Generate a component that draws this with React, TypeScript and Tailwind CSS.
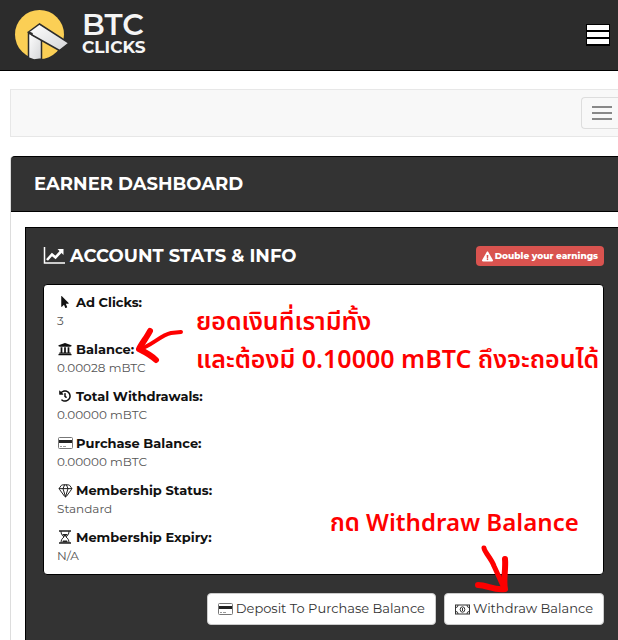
import type { ReactNode } from "react";
import { Gem } from "lucide-react";
import { FaExclamationTriangle, FaHistory, FaMousePointer, FaUniversity } from "react-icons/fa";

type Stat = {
  label: string;
  value: string;
  icon: ReactNode;
};

const stats: Stat[] = [
  { label: "Ad Clicks:", value: "3", icon: <FaMousePointer className="size-3" /> },
  { label: "Balance:", value: "0.00028 mBTC", icon: <FaUniversity className="size-3.5" /> },
  { label: "Total Withdrawals:", value: "0.00000 mBTC", icon: <FaHistory className="size-3" /> },
  { label: "Purchase Balance:", value: "0.00000 mBTC", icon: <CardIcon /> },
  { label: "Membership Status:", value: "Standard", icon: <Gem className="size-[15px]" strokeWidth={1.5} /> },
  { label: "Membership Expiry:", value: "N/A", icon: <HourglassIcon /> },
];

export default function App() {
  return (
    <div className="min-h-screen overflow-hidden bg-white font-[Montserrat,Inter,sans-serif] text-[#333]">
      <SiteHeader />
      <main className="pl-2.5">
        <nav aria-label="Account" className="mt-[18px] flex h-12 items-center justify-end border border-r-0 border-[#e7e7e7] bg-[#f8f8f8]">
          <button type="button" aria-label="Toggle navigation" className="flex h-8 w-[37px] flex-col items-start justify-center gap-1 rounded-l border border-r-0 border-[#ddd] pl-2.5">
            <span className="h-0.5 w-5 bg-[#888]" />
            <span className="h-0.5 w-5 bg-[#888]" />
            <span className="h-0.5 w-5 bg-[#888]" />
          </button>
        </nav>

        <section className="mt-[19px] rounded-tl border-l border-[#ddd]">
          <h1 className="rounded-tl border-y border-black bg-[#333] py-[15px] pl-[23px] text-lg leading-6 font-bold text-white">EARNER DASHBOARD</h1>
          <div className="pt-[15px] pl-3.5">
            <AccountStats />
          </div>
        </section>
      </main>
    </div>
  );
}

function SiteHeader() {
  return (
    <header className="flex h-[71px] items-center justify-between border-b border-black bg-[#2c2c2c] pr-2 pl-3.5">
      <a href="#" className="flex items-center gap-3 text-[#f5f5f5]">
        <LogoMark />
        <span className="flex flex-col pb-1">
          <span className="text-3xl leading-7 font-semibold">BTC</span>
          <span className="text-[17px] leading-4 font-bold">CLICKS</span>
        </span>
      </a>
      <button type="button" aria-label="Open menu" className="text-white">
        <svg viewBox="0 0 24 22" className="h-[22px] w-6">
          <path d="M0 0h24v22H0z" fill="#000" />
          <path d="M1 1h22v5H1zM1 8h22v5H1zM1 15h22v5H1z" fill="currentColor" />
        </svg>
      </button>
    </header>
  );
}

function AccountStats() {
  return (
    <section className="border-t border-l border-black bg-[#333] pt-4 pr-3.5 pb-4 pl-[17px]">
      <div className="flex items-center justify-between">
        <h2 className="flex items-center gap-1 text-lg leading-6 font-bold text-white">
          <ChartIcon />
          ACCOUNT STATS &amp; INFO
        </h2>
        <a href="#" className="flex items-center gap-0.5 rounded-sm bg-[#d9534f] px-1.5 text-[9px] leading-5 font-extrabold text-white">
          <FaExclamationTriangle className="size-[11px]" />
          Double your earnings
        </a>
      </div>

      <div className="relative mt-4 rounded-sm border border-black bg-white px-[13px] pt-[7px] pb-[9px]">
        <dl className="flex flex-col gap-[9px]">
          {stats.map((stat) => (
            <div key={stat.label}>
              <dt className="flex items-center gap-[3px] text-[13px] leading-5 font-bold text-[#111]">
                <span className="flex w-4 justify-center">{stat.icon}</span>
                {stat.label}
              </dt>
              <dd className="text-xs leading-[18px] text-[#555]">{stat.value}</dd>
            </div>
          ))}
        </dl>
        <Notes />
      </div>

      <div className="mt-[18px] flex justify-end gap-2">
        <ActionButton icon={<CardIcon />} label="Deposit To Purchase Balance" />
        <ActionButton icon={<MoneyIcon />} label="Withdraw Balance" />
      </div>
    </section>
  );
}

function ActionButton({ icon, label }: { icon: ReactNode; label: string }) {
  return (
    <button type="button" className="flex h-8 items-center gap-[3px] rounded border border-[#ccc] bg-white px-2.5 text-[13px] whitespace-nowrap text-[#333]">
      {icon}
      {label}
    </button>
  );
}

// Handwritten style notes laid over the stats card
function Notes() {
  return (
    <div className="pointer-events-none absolute inset-0 font-['Noto_Sans_Thai','Open_Sans',sans-serif] whitespace-nowrap text-[#fe0000]">
      <p className="absolute top-[18px] left-[152px] text-[25px] leading-[38px] font-semibold">
        ยอดเงินที่เรามีทั้ง
        <br />
        และต้องมี 0.10000 mBTC ถึงจะถอนได้
      </p>
      <p className="absolute top-[220px] left-[286px] text-2xl leading-[38px] font-semibold">กด Withdraw Balance</p>
      <svg viewBox="0 0 48 38" className="absolute top-[42px] left-[92px] h-[38px] w-12" fill="none" stroke="currentColor" strokeLinecap="round" strokeLinejoin="round">
        <path d="M14 4C11 10 6 16 3 22C9 25 15 28 20 33" strokeWidth="6" />
        <path d="M4 22C15 19 25 8 35 6L45 5" strokeWidth="4" />
      </svg>
      <svg viewBox="0 0 36 52" className="absolute top-[259px] left-[430px] h-[52px] w-9" fill="none" stroke="currentColor" strokeLinecap="round" strokeLinejoin="round">
        <path d="M10 4C11 9 17 14 20 22L30 44" strokeWidth="5" />
        <path d="M31 15C32 26 29 35 31 45C21 47 13 41 4 41" strokeWidth="6" />
      </svg>
    </div>
  );
}

function LogoMark() {
  return (
    <svg viewBox="0 0 56 52" className="h-[52px] w-14" aria-hidden="true">
      <defs>
        <linearGradient id="roof" x1="0" y1="0" x2="1" y2="1">
          <stop offset="0" stopColor="#fff" />
          <stop offset="1" stopColor="#d4d5d7" />
        </linearGradient>
      </defs>
      <circle cx="25.5" cy="25.5" r="24.5" fill="#fbcf55" />
      <path d="M14.500 24V49L20 51L27.500 50V30Z" fill="url(#roof)" stroke="#2c2c2c" strokeWidth="1.500" />
      <path d="M14.500 23L25.500 15L55 34L45.500 41.500L18 26V24.500Z" fill="url(#roof)" stroke="#2c2c2c" strokeWidth="1.500" />
    </svg>
  );
}

function ChartIcon() {
  return (
    <svg viewBox="0 0 23 18" className="h-[18px] w-[23px]" aria-hidden="true">
      <path d="M1.500 0V16H22" fill="none" stroke="currentColor" strokeWidth="1.500" />
      <path d="M4 13L9 7.500L12.500 10.500L18 4.500" fill="none" stroke="currentColor" strokeWidth="2.600" />
      <path d="M14.500 2H20.500V8Z" fill="currentColor" />
    </svg>
  );
}

function CardIcon() {
  return (
    <svg viewBox="0 0 15 12" className="h-3 w-[15px] shrink-0" aria-hidden="true">
      <rect x=".5" y=".5" width="14" height="11" rx="1" fill="none" stroke="#777" />
      <path d="M1 3h13v3H1z" fill="#222" />
      <path d="M2 9.500h2M5 9.500h3" stroke="#999" />
    </svg>
  );
}

function MoneyIcon() {
  return (
    <svg viewBox="0 0 15 11" className="h-[11px] w-[15px] shrink-0" fill="none" stroke="#333" aria-hidden="true">
      <rect x=".5" y="1" width="14" height="9" />
      <ellipse cx="7.500" cy="5.500" rx="2.300" ry="2.700" />
      <path d="M7.500 4v3M1 3.500Q3 3.500 3 1M14 3.500Q12 3.500 12 1M1 7.500Q3 7.500 3 10M14 7.500Q12 7.500 12 10" />
    </svg>
  );
}

function HourglassIcon() {
  return (
    <svg viewBox="0 0 12 14" className="h-3.5 w-3" fill="none" stroke="#222" aria-hidden="true">
      <path d="M0 1H12M0 13H12" strokeWidth="1.600" />
      <path d="M2 1C2 4 3 5.500 5 7C3 8.500 2 10 2 13M10 1C10 4 9 5.500 7 7C9 8.500 10 10 10 13" />
      <path d="M3 4H9L6 7ZM3 12.500L4 10.500H8L9 12.500Z" fill="#222" stroke="none" />
    </svg>
  );
}
